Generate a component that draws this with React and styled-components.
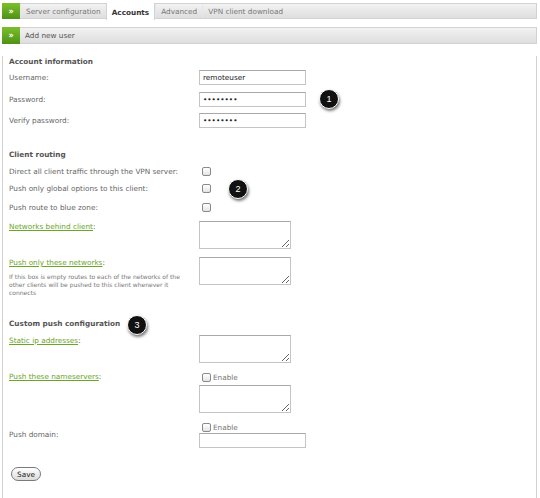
import React from 'react'
import styled, { createGlobalStyle } from 'styled-components'

const Global = createGlobalStyle`
  html, body { margin: 0; padding: 0; background: #fff; }
  body { font-family: "DejaVu Sans", Verdana, sans-serif; font-size: 7.3px; color: #666; }
`

const Page = styled.div`
  width: 535px;
  padding: 3px 0 0 2px;
`

const Bar = styled.div`
  display: flex;
  align-items: stretch;
  height: 16px;
  background: linear-gradient(#f2f2f2, #dedede);
  border: 1px solid #d2d2d2;
  box-sizing: border-box;
`

const GreenBox = styled.div`
  width: 18px;
  flex: none;
  margin: -1px 0 -1px -1px;
  background: linear-gradient(#7cbf2c, #4f9214);
  color: #fff;
  font-size: 8px;
  font-weight: bold;
  display: flex;
  align-items: center;
  justify-content: center;
`

const Tab = styled.div`
  display: flex;
  align-items: center;
  color: ${p => (p.active ? '#333' : '#777')};
  font-weight: ${p => (p.active ? 'bold' : 'normal')};
  background: ${p => (p.active ? '#fff' : 'transparent')};
  border-left: 1px solid ${p => (p.active ? '#d2d2d2' : '#e6e6e6')};
  border-right: ${p => (p.active ? '1px solid #d2d2d2' : 'none')};
  margin: ${p => (p.active ? '-1px 0 -2px 0' : '0')};
  padding: ${p => (p.active ? '1px 5px 0' : '0 5px')};
  white-space: nowrap;
`

const Panel = styled.div`
  margin-top: 8px;
`

const PanelHead = styled(Bar)`
  height: 17px;
`

const HeadTitle = styled.div`
  display: flex;
  align-items: center;
  padding-left: 5px;
  color: #555;
`

const Body = styled.div`
  border: 1px solid #d2d2d2;
  border-top: none;
  height: 448px;
  box-sizing: border-box;
  padding: 0 6px;
  position: relative;
`

const SectionTitle = styled.div`
  font-weight: bold;
  color: #555;
  line-height: 11px;
  margin-top: ${p => p.top}px;
  position: relative;
`

const Row = styled.div`
  display: grid;
  grid-template-columns: 190px auto;
  align-items: ${p => (p.middle ? 'center' : 'start')};
  margin-top: ${p => p.top}px;
  position: relative;
`

const Label = styled.div`
  line-height: 11px;
  white-space: nowrap;
`

const Link = styled.a`
  color: #6aa625;
  text-decoration: underline;
  cursor: pointer;
`

const Help = styled.div`
  font-size: 6px;
  line-height: 8px;
  color: #777;
  margin-top: 5px;
  width: 180px;
`

const Input = styled.input`
  width: 107px;
  height: 15px;
  box-sizing: border-box;
  border: 1px solid #c4c4c4;
  border-top-color: #a8a8a8;
  padding: 0 3px;
  font: 7.3px "DejaVu Sans", Verdana, sans-serif;
  color: #222;
  outline: none;
`

const Area = styled.textarea`
  width: 92px;
  height: 28px;
  box-sizing: border-box;
  border: 1px solid #c4c4c4;
  border-top-color: #a8a8a8;
  margin: 0;
  padding: 2px;
  display: block;
`

const Box = styled.span`
  display: inline-block;
  width: 7px;
  height: 7px;
  border: 1px solid #8a8a8a;
  border-radius: 2px;
  background: linear-gradient(#fff, #e4e4e4);
  vertical-align: middle;
`

const Check = styled.label`
  display: flex;
  align-items: center;
  gap: 2px;
  height: 12px;
  margin-left: 3px;
  color: #777;
`

const Stack = styled.div`
  display: flex;
  flex-direction: column;
  gap: ${p => p.gap || 0}px;
`

const Badge = styled.div`
  position: absolute;
  left: ${p => p.x}px;
  top: ${p => p.y}px;
  width: 18px;
  height: 18px;
  border-radius: 50%;
  background: #111;
  border: 1.5px solid #fff;
  box-shadow: 1px 2px 3px rgba(0, 0, 0, 0.55);
  color: #fff;
  font: 9px "Liberation Sans", Arial, sans-serif;
  display: flex;
  align-items: center;
  justify-content: center;
`

const Save = styled.button`
  margin: 19px 0 0 2px;
  width: 30px;
  height: 14px;
  padding: 0;
  border: 1px solid #7a7a7a;
  border-radius: 7px;
  background: linear-gradient(#fff, #dcdcdc);
  font: 7.3px "DejaVu Sans", Verdana, sans-serif;
  color: #222;
  display: block;
`

function Chevron() {
  return <GreenBox>&raquo;</GreenBox>
}

export default function App() {
  const tabs = ['Server configuration', 'Accounts', 'Advanced', 'VPN client download']
  return (
    <Page>
      <Global />
      <Bar>
        <Chevron />
        {tabs.map(t => (
          <Tab key={t} active={t === 'Accounts'}>{t}</Tab>
        ))}
      </Bar>

      <Panel>
        <PanelHead>
          <Chevron />
          <HeadTitle>Add new user</HeadTitle>
        </PanelHead>
        <Body>
          <SectionTitle top={12}>Account information</SectionTitle>
          <Row top={3} middle>
            <Label>Username:</Label>
            <Input defaultValue="remoteuser" />
          </Row>
          <Row top={7} middle>
            <Label>Password:</Label>
            <Input type="password" defaultValue="password" />
            <Badge x={310} y={-3}>1</Badge>
          </Row>
          <Row top={6} middle>
            <Label>Verify password:</Label>
            <Input type="password" defaultValue="password" />
          </Row>

          <SectionTitle top={21}>Client routing</SectionTitle>
          <Row top={5} middle>
            <Label>Direct all client traffic through the VPN server:</Label>
            <Check><Box /></Check>
          </Row>
          <Row top={5} middle>
            <Label>Push only global options to this client:</Label>
            <Check><Box /></Check>
            <Badge x={219} y={-3}>2</Badge>
          </Row>
          <Row top={7} middle>
            <Label>Push route to blue zone:</Label>
            <Check><Box /></Check>
          </Row>
          <Row top={8}>
            <Label><Link>Networks behind client</Link>:</Label>
            <Area />
          </Row>
          <Row top={8}>
            <div>
              <Label><Link>Push only these networks</Link>:</Label>
              <Help>
                If this box is empty routes to each of the networks of the other clients will be
                pushed to this client whenever it connects
              </Help>
            </div>
            <Area />
          </Row>

          <SectionTitle top={21}>
            Custom push configuration
            <Badge x={118} y={-3}>3</Badge>
          </SectionTitle>
          <Row top={6}>
            <Label><Link>Static ip addresses</Link>:</Label>
            <Area />
          </Row>
          <Row top={8}>
            <Label><Link>Push these nameservers</Link>:</Label>
            <Stack gap={2}>
              <Check><Box />Enable</Check>
              <Area />
            </Stack>
          </Row>
          <Row top={8} middle>
            <Label>Push domain:</Label>
            <Stack gap={0}>
              <Check><Box />Enable</Check>
              <Input />
            </Stack>
          </Row>

          <Save>Save</Save>
        </Body>
      </Panel>
    </Page>
  )
}
